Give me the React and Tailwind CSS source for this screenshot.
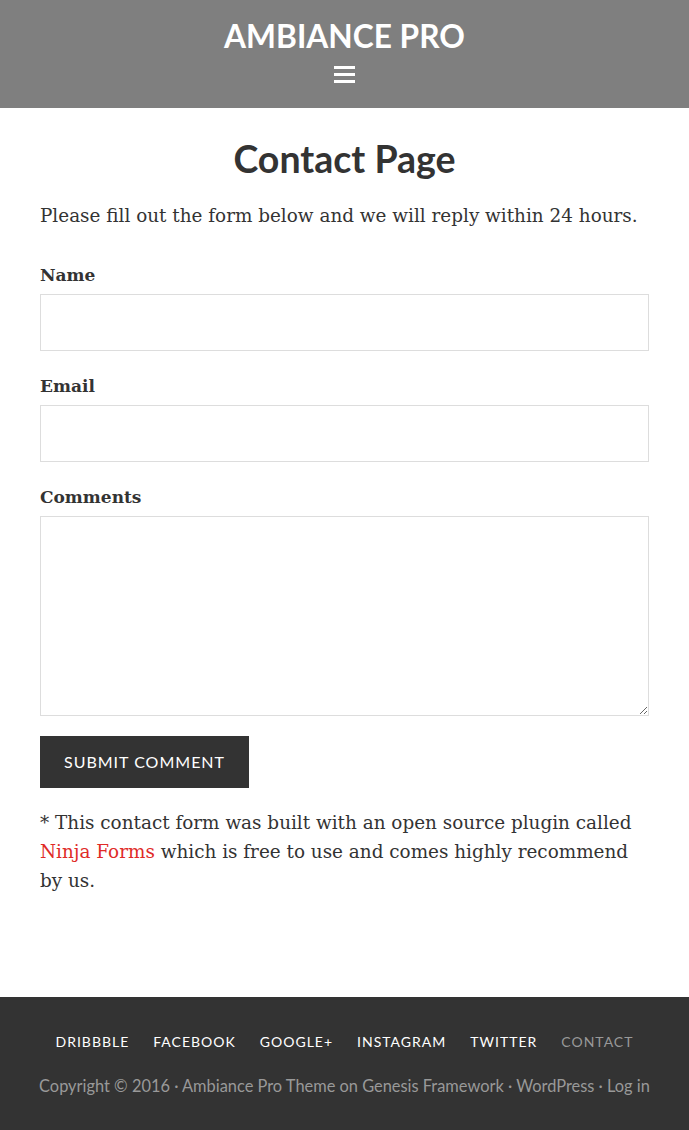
const footerLinks = ['Dribbble', 'Facebook', 'Google+', 'Instagram', 'Twitter']

function Field({ label, children }) {
  return (
    <div className="flex flex-col">
      <label className="font-bold text-[17px] leading-[27px] mb-[5px]">{label}</label>
      {children}
    </div>
  )
}

export default function App() {
  return (
    <div className="min-h-screen flex flex-col bg-white text-[#333]" style={{ fontFamily: 'Lato, sans-serif' }}>
      <header className="bg-[#7f7f7f] h-[108px] flex flex-col items-center pt-[16px]">
        <h1 className="text-white font-bold text-[31.7px] leading-[40px] uppercase">Ambiance Pro</h1>
        <button className="mt-[10px] flex flex-col gap-[4px] w-[21px]">
          <span className="block h-[3px] bg-white" />
          <span className="block h-[3px] bg-white" />
          <span className="block h-[3px] bg-white" />
        </button>
      </header>

      <main className="flex-1 px-10 pt-[27px] pb-[100px]">
        <h2 className="text-center font-bold text-[37.5px] leading-[48px]">Contact Page</h2>

        <div style={{ fontFamily: '"DejaVu Serif", serif' }}>
          <p className="mt-[18px] text-[18.4px] leading-[29px]">
            Please fill out the form below and we will reply within 24 hours.
          </p>

          <form className="mt-[32px] flex flex-col">
            <div className="flex flex-col gap-[22px]">
              <Field label="Name">
                <input className="h-[57px] border border-[#ddd] px-4" />
              </Field>
              <Field label="Email">
                <input className="h-[57px] border border-[#ddd] px-4" />
              </Field>
              <Field label="Comments">
                <textarea className="h-[200px] border border-[#ddd] px-4 py-3 resize-y" />
              </Field>
            </div>
            <div className="mt-[20px]">
              <button
                type="button"
                className="bg-[#333] text-white uppercase text-[16px] tracking-[1px] h-[52px] w-[209px]"
                style={{ fontFamily: 'Lato, sans-serif' }}
              >
                Submit Comment
              </button>
            </div>
          </form>

          <p className="mt-[20px] text-[18.4px] leading-[29px]">
            * This contact form was built with an open source plugin called{' '}
            <a href="#" className="text-[#e02b27]">Ninja Forms</a> which is free to use and comes highly recommend by us.
          </p>
        </div>
      </main>

      <footer className="bg-[#333] h-[133px] flex flex-col items-center pt-[36px]">
        <nav className="flex gap-[24px] text-[14px] tracking-[1px] uppercase leading-[18px]">
          {footerLinks.map(l => (
            <a key={l} href="#" className="text-white">{l}</a>
          ))}
          <a href="#" className="text-[#999]">Contact</a>
        </nav>
        <p className="mt-[25px] text-[16.4px] text-[#999] leading-[20px]">
          Copyright © 2016 · Ambiance Pro Theme on Genesis Framework · WordPress · Log in
        </p>
      </footer>
    </div>
  )
}
